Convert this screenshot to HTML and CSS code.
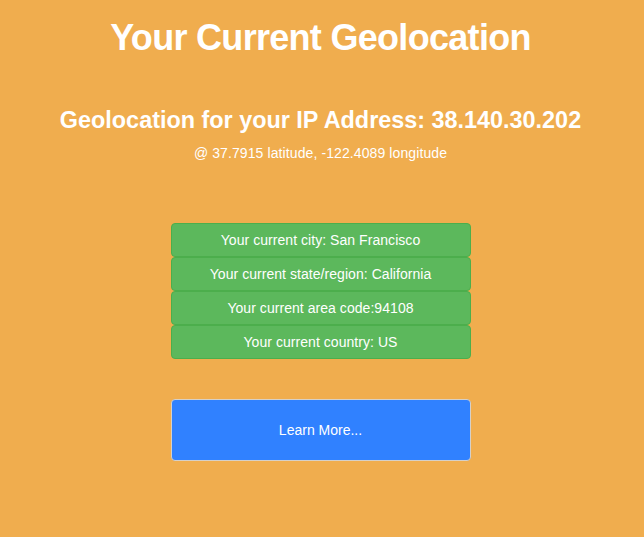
FILE: index.html
```html
<!DOCTYPE html>
<html>
<head>
<meta charset="utf-8">
<link rel="stylesheet" href="styles.css">
</head>
<body>
<main class="page">
  <h1 class="title">Your Current Geolocation</h1>
  <h2 class="subtitle">Geolocation for your IP Address: 38.140.30.202</h2>
  <p class="coords">@ 37.7915 latitude, -122.4089 longitude</p>
  <div class="info">
    <div class="info-item">Your current city: San Francisco</div>
    <div class="info-item">Your current state/region: California</div>
    <div class="info-item">Your current area code:94108</div>
    <div class="info-item">Your current country: US</div>
  </div>
  <a class="learn" href="#">Learn More...</a>
</main>
</body>
</html>
```
FILE: styles.css
```css
html, body {
  margin: 0;
  padding: 0;
  background: #f0ad4e;
  height: 100%;
}
body {
  font-family: "Liberation Sans", Arial, sans-serif;
  color: #fff;
}
.page {
  display: flex;
  flex-direction: column;
  align-items: center;
  padding: 20px 3px 0 0;
}
.title {
  margin: 0;
  font-size: 36px;
  line-height: 36px;
  letter-spacing: -0.7px;
  font-weight: bold;
}
.subtitle {
  margin: 52px 0 0;
  font-size: 23.4px;
  line-height: 24px;
  font-weight: bold;
}
.coords {
  margin: 14px 0 0;
  font-size: 14px;
  line-height: 14px;
  letter-spacing: 0.1px;
}
.info {
  margin-top: 63px;
  width: 300px;
  display: flex;
  flex-direction: column;
}
.info-item {
  box-sizing: border-box;
  height: 34px;
  line-height: 32px;
  background: #5cb85c;
  border: 1px solid #4cae4c;
  border-radius: 4px;
  text-align: center;
  font-size: 14px;
  letter-spacing: 0.05px;
}
.learn {
  margin-top: 40px;
  box-sizing: border-box;
  width: 300px;
  height: 62px;
  line-height: 60px;
  background: #3081ff;
  border: 1px solid #d6d0c8;
  border-radius: 4px;
  text-align: center;
  font-size: 14px;
  color: #fff;
  text-decoration: none;
}
```
